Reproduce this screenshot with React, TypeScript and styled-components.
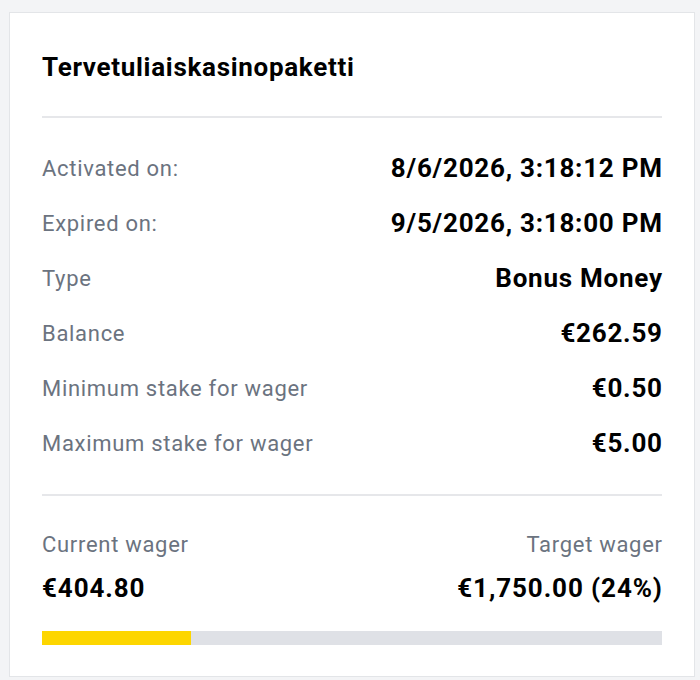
import React from "react";
import styled, { createGlobalStyle } from "styled-components";

const Global = createGlobalStyle`
  html, body { margin: 0; padding: 0; background: #f3f4f6; }
  body { font-family: Roboto, "Noto Sans", Arial, sans-serif; }
`;

const Page = styled.div`
  padding: 12px 5px 3px 9px;
`;

const Card = styled.div`
  background: #ffffff;
  border: 1px solid #e3e5e8;
  padding: 40px 32px 31px 32px;
  height: 665px;
  box-sizing: border-box;
  display: flex;
  flex-direction: column;
`;

const Title = styled.h2`
  margin: 0;
  font-size: 26px;
  line-height: 28px;
  letter-spacing: 0.7px;
  font-weight: 700;
  color: #000;
`;

const Divider = styled.hr<{ $top: number; $bottom: number }>`
  border: 0;
  height: 2px;
  background: #e6e7ea;
  margin: ${(p) => `${p.$top}px 0 ${p.$bottom}px`};
`;

const List = styled.div`
  display: flex;
  flex-direction: column;
`;

const Row = styled.div`
  display: flex;
  justify-content: space-between;
  align-items: center;
  height: 55px;
`;

const Label = styled.span`
  font-size: 22px;
  letter-spacing: 0.7px;
  color: #6b7380;
`;

const Value = styled.span`
  font-size: 26px;
  letter-spacing: 0.75px;
  margin-right: -0.75px;
  font-weight: 700;
  color: #000;
`;

const WagerGrid = styled.div`
  display: grid;
  grid-template-columns: 1fr 1fr;
  row-gap: 19px;
`;

const WagerLabel = styled.span<{ $right?: boolean }>`
  font-size: 22px;
  line-height: 24px;
  letter-spacing: 0.7px;
  color: #6b7380;
  text-align: ${(p) => (p.$right ? "right" : "left")};
  margin-right: ${(p) => (p.$right ? "-0.7px" : "0")};
`;

const WagerValue = styled.span<{ $right?: boolean }>`
  font-size: 26px;
  line-height: 24px;
  letter-spacing: 0.9px;
  font-weight: 700;
  color: #000;
  text-align: ${(p) => (p.$right ? "right" : "left")};
  margin-right: ${(p) => (p.$right ? "-0.9px" : "0")};
`;

const Track = styled.div`
  margin-top: 31px;
  height: 15px;
  background: #dfe1e6;
`;

const Fill = styled.div`
  height: 100%;
  background: #fdd600;
`;

const rows: [string, string][] = [
  ["Activated on:", "8/6/2026, 3:18:12 PM"],
  ["Expired on:", "9/5/2026, 3:18:00 PM"],
  ["Type", "Bonus Money"],
  ["Balance", "€262.59"],
  ["Minimum stake for wager", "€0.50"],
  ["Maximum stake for wager", "€5.00"],
];

export default function App() {
  const pct = 24;
  return (
    <>
      <Global />
      <Page>
        <Card>
          <Title>Tervetuliaiskasinopaketti</Title>
          <Divider $top={35} $bottom={23} />
          <List>
            {rows.map(([l, v]) => (
              <Row key={l}>
                <Label>{l}</Label>
                <Value>{v}</Value>
              </Row>
            ))}
          </List>
          <Divider $top={23} $bottom={37} />
          <WagerGrid>
            <WagerLabel>Current wager</WagerLabel>
            <WagerLabel $right>Target wager</WagerLabel>
            <WagerValue>€404.80</WagerValue>
            <WagerValue $right>€1,750.00 ({pct}%)</WagerValue>
          </WagerGrid>
          <Track>
            <Fill style={{ width: `${pct}%` }} />
          </Track>
        </Card>
      </Page>
    </>
  );
}
